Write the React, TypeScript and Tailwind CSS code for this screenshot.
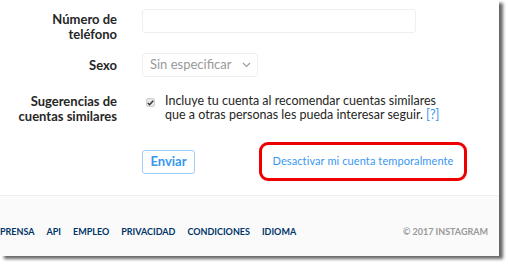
import React from "react";

const font = { fontFamily: 'Lato, "Liberation Sans", sans-serif' };

export default function App() {
  return (
    <div className="w-[508px] h-[265px] bg-white overflow-hidden" style={font}>
      <div className="w-[499px] h-[256px] bg-white flex flex-col shadow-[4px_3px_3px_rgba(0,0,0,0.6)]">
        <div className="h-[196px] border-b border-[#efefef] flex flex-col pt-[9px]">
          {/* Row 1 */}
          <div className="flex">
            <div className="w-[117px] text-right font-bold text-[13px] leading-[15px] text-[#262626] pt-[3px]">
              Número de<br />teléfono
            </div>
            <div className="ml-[25px] w-[274px] h-[24px] border border-[#efefef] rounded-[3px] bg-white" />
          </div>
          {/* Row 2 */}
          <div className="flex items-center mt-[11px]">
            <div className="w-[117px] text-right font-bold text-[13px] leading-[15px] text-[#262626]">Sexo</div>
            <div className="ml-[25px] w-[116px] h-[24px] border border-[#efefef] rounded-[3px] flex items-center pl-[7px] text-[13px] text-[#999]">
              <span>Sin especificar</span>
              <svg className="ml-[10px]" width="9" height="6" viewBox="0 0 9 6" fill="none" stroke="#999" strokeWidth="1.1">
                <path d="M1 1l3.5 3.5L8 1" />
              </svg>
            </div>
          </div>
          {/* Row 3 */}
          <div className="flex mt-[17px]">
            <div className="w-[117px] text-right font-bold text-[13px] leading-[15px] text-[#262626]">
              Sugerencias de<br />cuentas similares
            </div>
            <div className="ml-[29px] mt-[4px] w-[9px] h-[9px] rounded-[2px] bg-[#e8e8e8] border border-[#cfcfcf] flex items-center justify-center">
              <svg width="7" height="6" viewBox="0 0 7 6" fill="none" stroke="#333" strokeWidth="1.4">
                <path d="M0.8 3l1.8 1.8L6.2 0.8" />
              </svg>
            </div>
            <div className="ml-[10px] text-[12.5px] leading-[14px] text-[#262626] whitespace-nowrap">
              Incluye tu cuenta al recomendar cuentas similares<br />
              que a otras personas les pueda interesar seguir. <span className="text-[#3897f0]">[?]</span>
            </div>
          </div>
          {/* Row 4 */}
          <div className="flex items-center mt-[18px] ml-[142px]">
            <button className="w-[53px] h-[24px] border border-[#9fcdf9] rounded-[3px] text-[13px] font-bold text-[#3897f0] flex items-center justify-center">
              Enviar
            </button>
            <div className="ml-[64px] w-[208px] h-[39px] border-[3px] border-[#ee0000] rounded-[9px] flex items-center justify-center text-[11px] tracking-[0.1px] text-[#3897f0] whitespace-nowrap">
              Desactivar mi cuenta temporalmente
            </div>
          </div>
        </div>
        <div className="flex-1 bg-[#fafafa] flex items-center text-[9px] font-bold text-[#003569] pt-[12px]">
          <div className="flex gap-[12px]">
            <span>PRENSA</span>
            <span>API</span>
            <span>EMPLEO</span>
            <span>PRIVACIDAD</span>
            <span>CONDICIONES</span>
            <span>IDIOMA</span>
          </div>
          <span className="ml-auto mr-[11px] text-[#999]">© 2017 INSTAGRAM</span>
        </div>
      </div>
    </div>
  );
}
